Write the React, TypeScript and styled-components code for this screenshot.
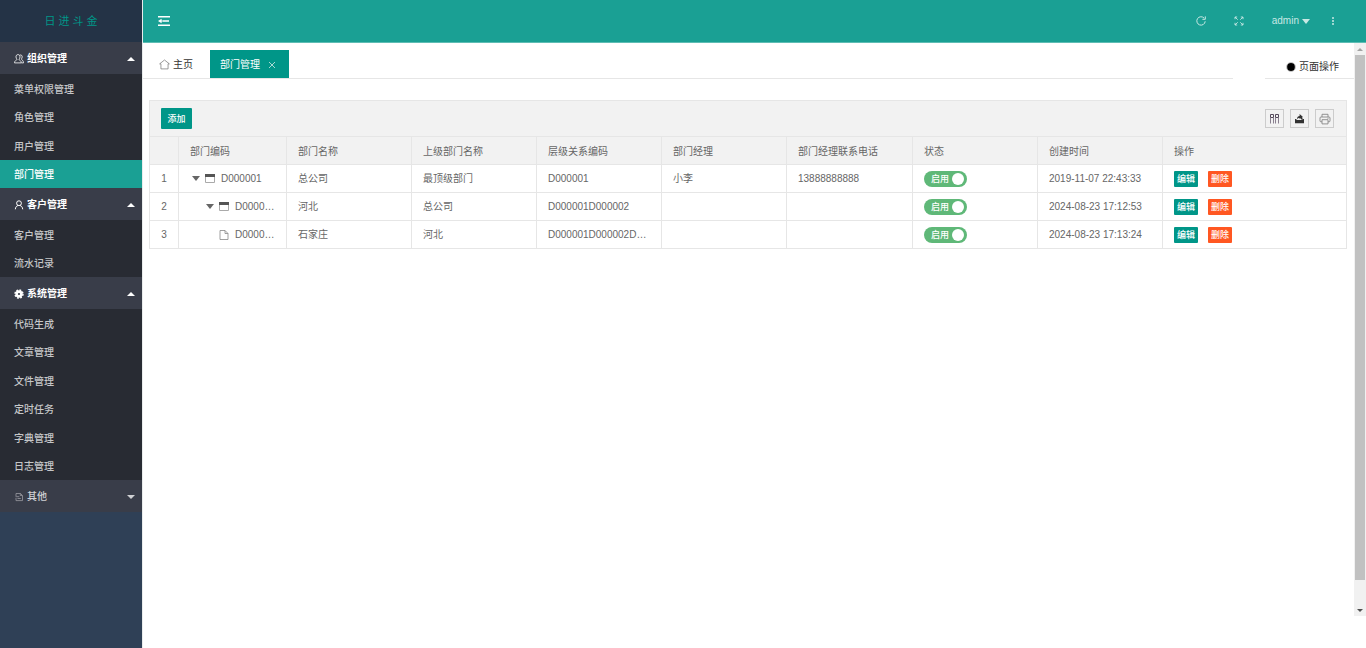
import React, { useState } from "react";
import styled, { createGlobalStyle, css } from "styled-components";

const teal = "#1aa094";
const green = "#009688";
const line = "#e6e6e6";

const GlobalStyle = createGlobalStyle`
  * { box-sizing: border-box; }
  body {
    margin: 0;
    background: #fff;
    color: #666;
    font: 10px/16px "Liberation Sans", "Noto Sans CJK SC", sans-serif;
  }
  button, input { font: inherit; color: inherit; margin: 0; }
  button { border: 0; padding: 0; background: none; cursor: pointer; }
  a { color: inherit; text-decoration: none; }
  ul { list-style: none; margin: 0; padding: 0; }
  svg { display: block; flex: none; }
`;

const Layout = styled.div`
  display: grid;
  grid-template-columns: 142px minmax(0, 1fr);
  min-height: 100vh;
`;

const Sidebar = styled.aside`
  background: #2f4056;
`;

const Logo = styled.div`
  height: 42px;
  display: flex;
  align-items: center;
  justify-content: center;
  background: #243346;
  color: ${green};
  font-size: 11px;
`;

const GroupButton = styled.button<{ $open: boolean }>`
  width: 100%;
  height: 32px;
  padding: 2px 7px 0 14px;
  display: flex;
  align-items: center;
  gap: 3px;
  background: #393d49;
  color: ${(p) => (p.$open ? "#fff" : "#d0d1d4")};
  font-weight: ${(p) => (p.$open ? 700 : 500)};
`;

const GroupTitle = styled.span`
  flex: 1;
  text-align: left;
`;

const Menu = styled.ul`
  background: #282b33;
`;

const MenuItem = styled.li<{ $active: boolean }>`
  height: 28px;
  &:nth-child(odd) { height: 29px; }
  background: ${(p) => (p.$active ? teal : "transparent")};
  color: ${(p) => (p.$active ? "#fff" : "#c5c6c8")};
  font-weight: 500;
`;

const MenuLink = styled.a`
  height: 100%;
  padding: 2px 0 0 14px;
  display: flex;
  align-items: center;
`;

const Main = styled.div`
  display: flex;
  flex-direction: column;
  min-width: 0;
  border-left: 1px solid #e9ecec;
`;

const TopBar = styled.header`
  height: 43px;
  display: flex;
  align-items: center;
  justify-content: space-between;
  padding: 0 24px 0 1px;
  background: ${teal};
  border-bottom: 1px solid #5fbdb4;
  color: #c8e8e4;
`;

const TopActions = styled.div`
  display: flex;
  align-items: center;
`;

const TopButton = styled.button`
  height: 42px;
  padding: 0 14px;
  display: flex;
  align-items: center;
  gap: 3px;
`;

const MoreButton = styled(TopButton)`
  padding: 0 8px;
`;

const Body = styled.div`
  flex: 1;
  display: flex;
  min-width: 0;
  padding-bottom: 32px;
`;

const Page = styled.main`
  flex: 1;
  min-width: 0;
`;

const TabBar = styled.div`
  height: 36px;
  display: flex;
  gap: 32px;
`;

const Tabs = styled.nav`
  flex: 1;
  display: flex;
  align-items: flex-end;
  border-bottom: 1px solid ${line};
`;

const Tab = styled.div<{ $active?: boolean }>`
  height: 28px;
  display: flex;
  align-items: center;
  gap: 8px;
  color: #333;
  padding: 2px 17px 0 16px;
  ${(p) =>
    p.$active &&
    css`
      padding: 2px 13px 0 10px;
      background: ${green};
      color: #fff;
    `}
`;

const TabLink = styled.a`
  display: flex;
  align-items: center;
  gap: 3px;
  svg { margin-bottom: 2px; }
`;

const PageActions = styled.div`
  width: 89px;
  display: flex;
  align-items: flex-end;
  justify-content: flex-end;
  padding: 0 15px 3px 0;
  border-bottom: 1px solid ${line};
  color: #333;
`;

const PageActionButton = styled.button`
  display: flex;
  align-items: center;
  gap: 3px;
`;

const Panel = styled.section`
  margin: 21px 7px 0 6px;
  border: 1px solid ${line};
  border-bottom: 0;
`;

const Toolbar = styled.div`
  height: 36px;
  padding: 0 12px 0 11px;
  display: flex;
  align-items: center;
  justify-content: space-between;
  background: #f2f2f2;
  border-bottom: 1px solid ${line};
`;

const ToolGroup = styled.div`
  display: flex;
  gap: 6px;
`;

const ToolButton = styled.button`
  width: 19px;
  height: 19px;
  display: flex;
  align-items: center;
  justify-content: center;
  border: 1px solid #ccc;
  color: #333;
`;

const AddButton = styled.button`
  width: 31px;
  height: 21px;
  padding-top: 1px;
  border-radius: 1px;
  background: ${green};
  color: #fff;
  font-size: 9px;
  font-weight: 500;
`;

const Table = styled.table`
  width: 100%;
  table-layout: fixed;
  border-collapse: separate;
  border-spacing: 0;
`;

const cell = css`
  height: 28px;
  padding: 0 11px;
  border-bottom: 1px solid ${line};
  border-right: 1px solid ${line};
  text-align: left;
  font-weight: 400;
  white-space: nowrap;
  overflow: hidden;
  text-overflow: ellipsis;
  &:last-child { border-right: 0; }
`;

const Th = styled.th`
  ${cell}
  padding-top: 2px;
  background: #f2f2f2;
`;

const Td = styled.td`
  ${cell}
`;

const IndexCell = styled(Td)`
  padding: 0;
  text-align: center;
`;

const Col = styled.col<{ $w?: number }>`
  width: ${(p) => (p.$w ? `${p.$w}px` : "auto")};
`;

const TreeNode = styled.div<{ $level: number; $leaf: boolean }>`
  display: flex;
  align-items: center;
  gap: 5px;
  padding-left: ${(p) => p.$level * 14 + (p.$leaf ? 1 : 2)}px;
`;

const TreeText = styled.span`
  padding: 1px 0 0 1px;
  overflow: hidden;
  text-overflow: ellipsis;
`;

const Switch = styled.label`
  width: 43px;
  height: 16px;
  padding: 0 3px 0 7px;
  display: flex;
  align-items: center;
  justify-content: space-between;
  border-radius: 8px;
  background: #5fb878;
  color: #fff;
  font-size: 9px;
  line-height: 18px;
  font-weight: 500;
  cursor: pointer;
`;

const SwitchInput = styled.input`
  appearance: none;
  width: 12px;
  height: 12px;
  border-radius: 50%;
  background: #fff;
`;

const RowActions = styled.div`
  display: flex;
  gap: 10px;
`;

const RowButton = styled.button<{ $danger?: boolean }>`
  width: 24px;
  height: 16px;
  padding-top: 1px;
  border-radius: 1px;
  background: ${(p) => (p.$danger ? "#ff5722" : green)};
  color: #fff;
  font-size: 9px;
  line-height: 15px;
  font-weight: 500;
`;

const ScrollTrack = styled.div`
  width: 12px;
  padding: 0 1px;
  display: flex;
  flex-direction: column;
  background: #f1f1f1;
`;

const ScrollArrow = styled.div<{ $end?: boolean }>`
  height: 12px;
  display: flex;
  align-items: center;
  justify-content: center;
  color: ${(p) => (p.$end ? "#505050" : "#a3a3a3")};
`;

const ScrollThumb = styled.div`
  flex: 1;
  margin-bottom: 24px;
  background: #c1c1c1;
`;

const Caret = ({ up = false, w = 8, h = 4 }: { up?: boolean; w?: number; h?: number }) => (
  <svg width={w} height={h} viewBox="0 0 8 4" preserveAspectRatio="none" fill="currentColor" aria-hidden>
    <path d={up ? "M0 4L4 0L8 4Z" : "M0 0H8L4 4Z"} />
  </svg>
);

const GroupIcon = () => (
  <svg width="10" height="10" viewBox="0 0 10 10" fill="none" stroke="currentColor" strokeWidth="0.8">
    <path d="M4 .6C2.6.6 2 1.7 2 2.9c0 1.100.5 1.900 1 2.400C3 6.200.5 6.300.5 8.900h6.800c0-2.600-2.400-2.700-2.300-3.600.6-.5 1-1.300 1-2.400C6 1.600 5.300.6 4 .6Z" />
    <path d="M5.800 1.100C7.500.5 8.300 1.800 8.200 3c0 1-.6 1.600-.9 2 .1.900 2.200 1 2.200 3.900H7.500" />
  </svg>
);

const UserIcon = () => (
  <svg width="10" height="10" viewBox="0 0 10 10" fill="none" stroke="currentColor" strokeWidth="1">
    <circle cx="5" cy="3.200" r="2.400" />
    <path d="M1.300 9.300C1.500 7 2.600 5.900 4 5.500M6 5.500c1.500.4 2.500 1.500 2.700 3.800" />
  </svg>
);

const GearIcon = () => (
  <svg width="10" height="10" viewBox="0 0 10 10" fill="none" stroke="currentColor">
    <circle cx="5" cy="5" r="2.400" strokeWidth="2.600" />
    <circle cx="5" cy="5" r="4" strokeWidth="1.400" strokeDasharray="1.800 1.342" />
  </svg>
);

const DocIcon = () => (
  <svg width="10" height="10" viewBox="0 0 10 10" fill="none" stroke="#9a9ba1" strokeWidth="0.8">
    <path d="M2 4V1.500h4.500L8.500 3.500v5.100H2V6M6.300 1.500v2h2M1.500 4.700h3.800M3.500 6.500h3.300" />
  </svg>
);

const FoldIcon = () => (
  <svg width="12" height="10" viewBox="0 0 12 10" fill="#fff">
    <path d="M0 0h12v1.500H0ZM5 4.200h6v1.500H5ZM0 8.500h12V10H0ZM0 5l3.600-2.300v4.600ZM3 4.500h3v1H3Z" />
  </svg>
);

const RefreshIcon = () => (
  <svg width="10" height="10" viewBox="0 0 10 10" fill="none" stroke="currentColor" strokeWidth="1">
    <path d="M9.200 5.300A4.200 4.200 0 1 1 8.200 2.200" />
    <path d="M9.300.4V3.300H6.400" />
  </svg>
);

const FullscreenIcon = () => (
  <svg width="10" height="10" viewBox="0 0 10 10" fill="none" stroke="currentColor" strokeWidth="0.9">
    <path d="M1 3.200V1h2.200M1 1l2.700 2.700M6.800 1H9v2.200M9 1L6.300 3.700M1 6.800V9h2.200M1 9l2.700-2.700M9 6.800V9H6.800M9 9L6.300 6.300" />
  </svg>
);

const MoreIcon = () => (
  <svg width="2" height="8" viewBox="0 0 2 8" fill="currentColor">
    <circle cx="1" cy="1" r="1" />
    <circle cx="1" cy="4" r="1" />
    <circle cx="1" cy="7" r="1" />
  </svg>
);

const HomeIcon = () => (
  <svg width="11" height="11" viewBox="0 0 12 11" fill="none" stroke="#777" strokeWidth="0.8">
    <path d="M2.100 4.800H.7L6 .6l5.300 4.200H9.900v5.500H2.100Z" />
  </svg>
);

const CloseIcon = () => (
  <svg width="8" height="8" viewBox="0 0 8 8" fill="none" stroke="#a9d9d4" strokeWidth="1">
    <path d="M1 1l6 6M7 1L1 7" />
  </svg>
);

const DotIcon = () => (
  <svg width="10" height="10" viewBox="0 0 10 10">
    <circle cx="5" cy="5" r="4.500" fill="none" stroke="#999" strokeWidth="0.6" />
    <circle cx="5" cy="5" r="3.900" fill="#000" />
  </svg>
);

const ColumnsIcon = () => (
  <svg width="11" height="11" viewBox="0 0 11 11" fill="none" strokeWidth="1">
    <path stroke="#554a5c" d="M1.500 1.500h3v3h-3ZM6.500 1.500h3v3h-3Z" />
    <path stroke="#8a8090" d="M1.500 5v5.500M4.500 5v5.500M6.500 5v5.500M9.500 5v5.500" />
  </svg>
);

const ExportIcon = () => (
  <svg width="11" height="11" viewBox="0 0 11 11" fill="#333">
    <path d="M1 6h1.500v1h6V6H10v4.200H1ZM3 6.200C3 4 4.200 3.200 5.600 3V1L8.800 3.800 5.600 6.200V5C4.500 5 3.700 5.300 3 6.200ZM7 4.500h1.500v2H7Z" />
  </svg>
);

const PrintIcon = () => (
  <svg width="12" height="12" viewBox="0 0 12 12" fill="none" stroke="#888" strokeWidth="0.9">
    <path d="M3 4V1.300h6V4M3 8.800H2C1.300 8.800 1 8.500 1 7.800V5c0-.7.3-1 1-1h8c.7 0 1 .3 1 1v2.800c0 .7-.3 1-1 1H9M3 6.700h6v4.200H3ZM8.500 5.300h1" />
  </svg>
);

const FolderIcon = () => (
  <svg width="10" height="9" viewBox="0 0 10 9">
    <path d="M.5.500h9v8h-9Z" fill="#fff" stroke="#aaa" />
    <path d="M0 0h10v3H0Z" fill="#555" />
  </svg>
);

const FileIcon = () => (
  <svg width="10" height="10" viewBox="0 0 10 10" fill="none" stroke="#888" strokeWidth="0.8">
    <path d="M1 .5h5L9 3.500v6H1ZM6 .5v3h3" />
  </svg>
);

const groups = [
  { title: "组织管理", icon: <GroupIcon />, items: ["菜单权限管理", "角色管理", "用户管理", "部门管理"], current: "部门管理" },
  { title: "客户管理", icon: <UserIcon />, items: ["客户管理", "流水记录"] },
  { title: "系统管理", icon: <GearIcon />, items: ["代码生成", "文章管理", "文件管理", "定时任务", "字典管理", "日志管理"] },
  { title: "其他", icon: <DocIcon />, items: [] as string[] },
];

const columns = ["部门编码", "部门名称", "上级部门名称", "层级关系编码", "部门经理", "部门经理联系电话", "状态", "创建时间", "操作"];
const widths = [29, 108, 125, 125, 125, 125, 126, 125, 125];

const rows = [
  { code: "D000001", name: "总公司", parent: "最顶级部门", path: "D000001", manager: "小李", phone: "13888888888", created: "2019-11-07 22:43:33", level: 0, leaf: false },
  { code: "D000002", name: "河北", parent: "总公司", path: "D000001D000002", manager: "", phone: "", created: "2024-08-23 17:12:53", level: 1, leaf: false },
  { code: "D000003", name: "石家庄", parent: "河北", path: "D000001D000002D000003", manager: "", phone: "", created: "2024-08-23 17:13:24", level: 2, leaf: true },
];

function MenuGroup({ group }: { group: (typeof groups)[number] }) {
  const [open, setOpen] = useState(group.items.length > 0);
  return (
    <div>
      <GroupButton $open={open} aria-expanded={open} onClick={() => setOpen(!open)}>
        {group.icon}
        <GroupTitle>{group.title}</GroupTitle>
        <Caret up={open} />
      </GroupButton>
      {open && (
        <Menu>
          {group.items.map((item) => (
            <MenuItem key={item} $active={item === group.current}>
              <MenuLink href="#">{item}</MenuLink>
            </MenuItem>
          ))}
        </Menu>
      )}
    </div>
  );
}

export default function App() {
  return (
    <>
      <GlobalStyle />
      <Layout>
        <Sidebar>
          <Logo>日 进 斗 金</Logo>
          {groups.map((g) => (
            <MenuGroup key={g.title} group={g} />
          ))}
        </Sidebar>
        <Main>
          <TopBar>
            <TopButton aria-label="收起菜单"><FoldIcon /></TopButton>
            <TopActions>
              <TopButton aria-label="刷新"><RefreshIcon /></TopButton>
              <TopButton aria-label="全屏"><FullscreenIcon /></TopButton>
              <TopButton>admin<Caret h={5} /></TopButton>
              <MoreButton aria-label="更多"><MoreIcon /></MoreButton>
            </TopActions>
          </TopBar>
          <Body>
            <Page>
              <TabBar>
                <Tabs>
                  <Tab><TabLink href="#"><HomeIcon />主页</TabLink></Tab>
                  <Tab $active>
                    <TabLink href="#">部门管理</TabLink>
                    <button aria-label="关闭"><CloseIcon /></button>
                  </Tab>
                </Tabs>
                <PageActions>
                  <PageActionButton><DotIcon />页面操作</PageActionButton>
                </PageActions>
              </TabBar>
              <Panel>
                <Toolbar>
                  <AddButton>添加</AddButton>
                  <ToolGroup>
                    <ToolButton aria-label="筛选列"><ColumnsIcon /></ToolButton>
                    <ToolButton aria-label="导出"><ExportIcon /></ToolButton>
                    <ToolButton aria-label="打印"><PrintIcon /></ToolButton>
                  </ToolGroup>
                </Toolbar>
                <Table>
                  <colgroup>
                    {widths.map((w, i) => <Col key={i} $w={w} />)}
                    <Col />
                  </colgroup>
                  <thead>
                    <tr>
                      <Th />
                      {columns.map((c) => <Th key={c} scope="col">{c}</Th>)}
                    </tr>
                  </thead>
                  <tbody>
                    {rows.map((r, i) => (
                      <tr key={r.code}>
                        <IndexCell>{i + 1}</IndexCell>
                        <Td>
                          <TreeNode $level={r.level} $leaf={r.leaf}>
                            {!r.leaf && <Caret h={5} />}
                            {r.leaf ? <FileIcon /> : <FolderIcon />}
                            <TreeText>{r.code}</TreeText>
                          </TreeNode>
                        </Td>
                        <Td>{r.name}</Td>
                        <Td>{r.parent}</Td>
                        <Td>{r.path}</Td>
                        <Td>{r.manager}</Td>
                        <Td>{r.phone}</Td>
                        <Td>
                          <Switch>启用<SwitchInput type="checkbox" role="switch" defaultChecked /></Switch>
                        </Td>
                        <Td>{r.created}</Td>
                        <Td>
                          <RowActions>
                            <RowButton>编辑</RowButton>
                            <RowButton $danger>删除</RowButton>
                          </RowActions>
                        </Td>
                      </tr>
                    ))}
                  </tbody>
                </Table>
              </Panel>
            </Page>
            <ScrollTrack aria-hidden>
              <ScrollArrow><Caret up w={6} h={3} /></ScrollArrow>
              <ScrollThumb />
              <ScrollArrow $end><Caret w={6} h={3} /></ScrollArrow>
            </ScrollTrack>
          </Body>
        </Main>
      </Layout>
    </>
  );
}
